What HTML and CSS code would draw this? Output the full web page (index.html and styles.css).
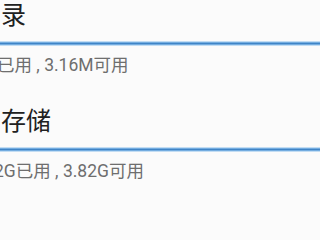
FILE: index.html
```html
<!DOCTYPE html>
<html lang="zh-CN">
<head>
<meta charset="utf-8">
<link rel="stylesheet" href="styles.css">
</head>
<body>
<div class="list">
  <div class="item">
    <div class="title">录</div>
    <div class="bar"></div>
    <div class="sub sub-first">已用 , 3.16M可用</div>
  </div>
  <div class="item">
    <div class="title">存储</div>
    <div class="bar"></div>
    <div class="sub sub-second">2G已用 , 3.82G可用</div>
  </div>
</div>
</body>
</html>
```
FILE: styles.css
```css
html, body {
  margin: 0;
  padding: 0;
  background: #fbfbfb;
  overflow: hidden;
}
.list {
  display: flex;
  flex-direction: column;
  width: 100%;
  height: 203px;
  overflow: hidden;
}
.item {
  display: flex;
  flex-direction: column;
  height: 106px;
  flex: none;
}
.title {
  font-family: Roboto, "Noto Sans CJK SC", sans-serif;
  font-size: 25px;
  line-height: 32px;
  height: 32px;
  color: #212121;
  padding-left: 1px;
  white-space: nowrap;
}
.bar {
  margin-top: 9px;
  height: 5px;
  background: linear-gradient(to bottom, #c3ddf3 0, #c3ddf3 1px, #73ace0 1px, #73ace0 2px, #3f84c6 2px, #3f84c6 3px, #73ace0 3px, #73ace0 4px, #c3ddf3 4px, #c3ddf3 5px);
}
.sub {
  margin-top: 8px;
  font-family: Roboto, "Noto Sans CJK SC", sans-serif;
  font-size: 17.5px;
  line-height: 22px;
  height: 22px;
  color: #6e6e6e;
  white-space: nowrap;
}
.sub-first {
  margin-left: -3px;
}
.sub-second {
  margin-left: -6px;
}
```
